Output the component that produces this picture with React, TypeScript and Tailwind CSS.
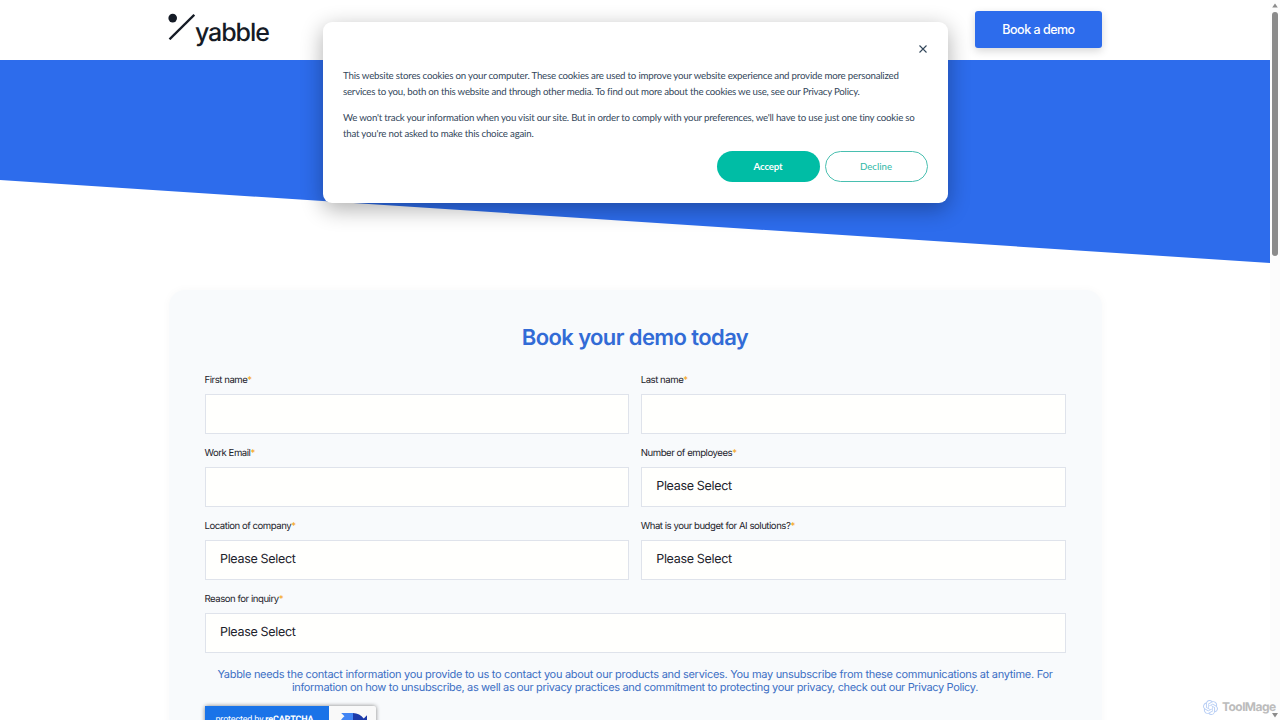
import { SiOpenai } from "react-icons/si";

type FieldProps = {
  label: string;
  select?: boolean;
  wide?: boolean;
};

const fields: FieldProps[] = [
  { label: "First name" },
  { label: "Last name" },
  { label: "Work Email" },
  { label: "Number of employees", select: true },
  { label: "Location of company", select: true },
  { label: "What is your budget for AI solutions?", select: true },
  { label: "Reason for inquiry", select: true, wide: true },
];

function Logo() {
  return (
    <a className="flex items-start text-[#151b26]">
      <svg width="27" height="27" viewBox="0 0 27 27" fill="none">
        <circle cx="4.7" cy="5.1" r="4.3" fill="currentColor" />
        <path d="M1.5 26.3L26.3 1.8" stroke="currentColor" strokeWidth="2.4" />
      </svg>
      <span className="mt-[5px] font-['Inter'] text-[25px] leading-[30px] font-[450] tracking-[-1.1px]">yabble</span>
    </a>
  );
}

function Field({ label, select, wide }: FieldProps) {
  return (
    <div className={wide ? "col-span-2" : ""}>
      <label className="block h-5 pt-px text-[9.6px] leading-5 tracking-[-0.47px] text-[#1c222b]">
        {label}
        <span className="text-[#f5a623]">*</span>
      </label>
      <div className="mt-1 flex h-10 items-center border border-[#dfe3eb] bg-[#fffffd] px-[14.5px] text-[12.5px] leading-[18px] tracking-[-0.32px] text-[#1c222b]">
        {select && "Please Select"}
      </div>
    </div>
  );
}

function Recaptcha() {
  return (
    <div className="mt-[13px] flex h-[40px] w-[171px] rounded-[2px] bg-[#f9f9f9] shadow-[0_0_4px_#808080]">
      <div className="w-[124px] bg-[#1a73e8] pl-[11px] pt-2 font-['Roboto'] text-[9px] leading-3 tracking-[-0.18px] whitespace-nowrap text-white">
        protected by <b>reCAPTCHA</b>
      </div>
      <svg className="mt-[7px] ml-[10px]" width="28" height="28" viewBox="0 0 64 64">
        <path fill="#1c3aa9" d="M64 32V5l-7.500 7.500C51 5 42 0 32 0v16c6 0 10 2 13 7l-9 9z" />
        <path fill="#4285f4" d="M32 0H5l7.500 7.500C5 13 0 22 0 32h16c0-6 2-10 7-13l9 9z" />
        <path fill="#ababab" d="M0 32v27l7.500-7.500C13 59 22 64 32 64c11 0 20-5 26-13L45 40c-3 5-7 8-13 8s-10-2-13-7l9-9z" />
      </svg>
    </div>
  );
}

function CookieBanner() {
  return (
    <div className="absolute top-[21.500px] left-[322.500px] h-[181px] w-[625.500px] rounded-[9px] bg-white px-5 pt-[21px] font-['Lato'] text-[#33475b] shadow-[0_6px_22px_rgba(0,0,0,0.32)]">
      <div className="flex h-3 justify-end pr-px">
        <svg width="8" height="12" viewBox="0 0 8 12" fill="none" stroke="#33475b" strokeWidth="1.1">
          <path d="M0.5 2.500L7.500 9.500M7.500 2.500L0.500 9.500" />
        </svg>
      </div>
      <div className="mt-[13px] pl-[0.5px] text-[9.700px] leading-[16.5px] tracking-[-0.207px] whitespace-nowrap">
        <p>
          This website stores cookies on your computer. These cookies are used to improve your website experience and provide more personalized
          <br />
          <span className="tracking-[-0.225px]">
            services to you, both on this website and through other media. To find out more about the cookies we use, see our Privacy Policy.
          </span>
        </p>
        <p className="mt-[9px]">
          We won't track your information when you visit our site. But in order to comply with your preferences, we'll have to use just one tiny cookie so
          <br />
          that you're not asked to make this choice again.
        </p>
      </div>
      <div className="mt-2 flex justify-end gap-[5px] pr-[0.5px] text-[9.700px]">
        <button className="h-[31px] w-[103px] rounded-full bg-[#00bda5] font-bold tracking-[-0.2px] text-white">Accept</button>
        <button className="h-[31px] w-[103px] rounded-full border border-[#49bfb0] text-[#2fb8a7]">Decline</button>
      </div>
    </div>
  );
}

function Scrollbar() {
  return (
    <div className="flex w-[10px] flex-col items-center bg-[#fcfcfc]">
      <svg width="10" height="12" viewBox="0 0 10 12">
        <path d="M5 3.500L7.800 7.600H2.200z" fill="#8b8b8b" />
      </svg>
      <div className="h-[244px] w-1.5 rounded-full bg-[#8b8b8b]" />
      <svg className="mt-auto" width="10" height="10" viewBox="0 0 10 10">
        <path d="M2 3h6L5 7.500z" fill="#8b8b8b" />
      </svg>
    </div>
  );
}

export default function App() {
  return (
    <div className="relative flex h-[720px] w-[1280px] overflow-hidden bg-white font-['Inter'] [text-rendering:geometricPrecision]">
      <div className="w-[1270px]">
        <header className="flex h-[60px] items-start justify-between bg-white pr-[168px] pl-[168px]">
          <div className="pt-[13px]">
            <Logo />
          </div>
          <button className="mt-[11px] h-[37px] w-[127px] rounded-[3px] bg-[#2d6cec] pt-px text-[12.5px] font-medium tracking-[-0.5px] text-white shadow-[0_3px_8px_rgba(0,0,0,0.16)]">
            Book a demo
          </button>
        </header>
        <svg className="block" width="1270" height="203" viewBox="0 0 1270 203">
          <path d="M0 0H1270V203L0 120z" fill="#2d6cec" />
        </svg>
        <section className="mx-auto mt-[27px] h-[600px] w-[933px] rounded-[16px] bg-[#f8fafc] pr-[36px] pl-[36px] pt-[33px] shadow-[0_0_10px_rgba(0,0,0,0.03)]">
          <h1 className="text-center text-[22px] leading-[30px] font-semibold tracking-[-0.600px] text-[#326bd6]">Book your demo today</h1>
          <form className="mt-[17px] grid grid-cols-2 gap-x-[11.500px] gap-y-[9px]">
            {fields.map((field) => (
              <Field key={field.label} {...field} />
            ))}
          </form>
          <p className="mt-[15px] text-center text-[11px] leading-[12.500px] tracking-[-0.29px] whitespace-nowrap text-[#3c6fc4]">
            Yabble needs the contact information you provide to us to contact you about our products and services. You may unsubscribe from these communications at anytime. For
            <br />
            <span className="tracking-[-0.34px]">
              information on how to unsubscribe, as well as our privacy practices and commitment to protecting your privacy, check out our Privacy Policy.
            </span>
          </p>
          <Recaptcha />
        </section>
      </div>
      <Scrollbar />
      <CookieBanner />
      <div className="absolute top-[699px] left-[1203px] flex items-center gap-1 text-[#bcbcbc]">
        <SiOpenai className="size-[15px] text-[#b9cff5]" />
        <span className="text-[12px] leading-4 font-bold tracking-[-0.550px]">ToolMage</span>
      </div>
    </div>
  );
}
